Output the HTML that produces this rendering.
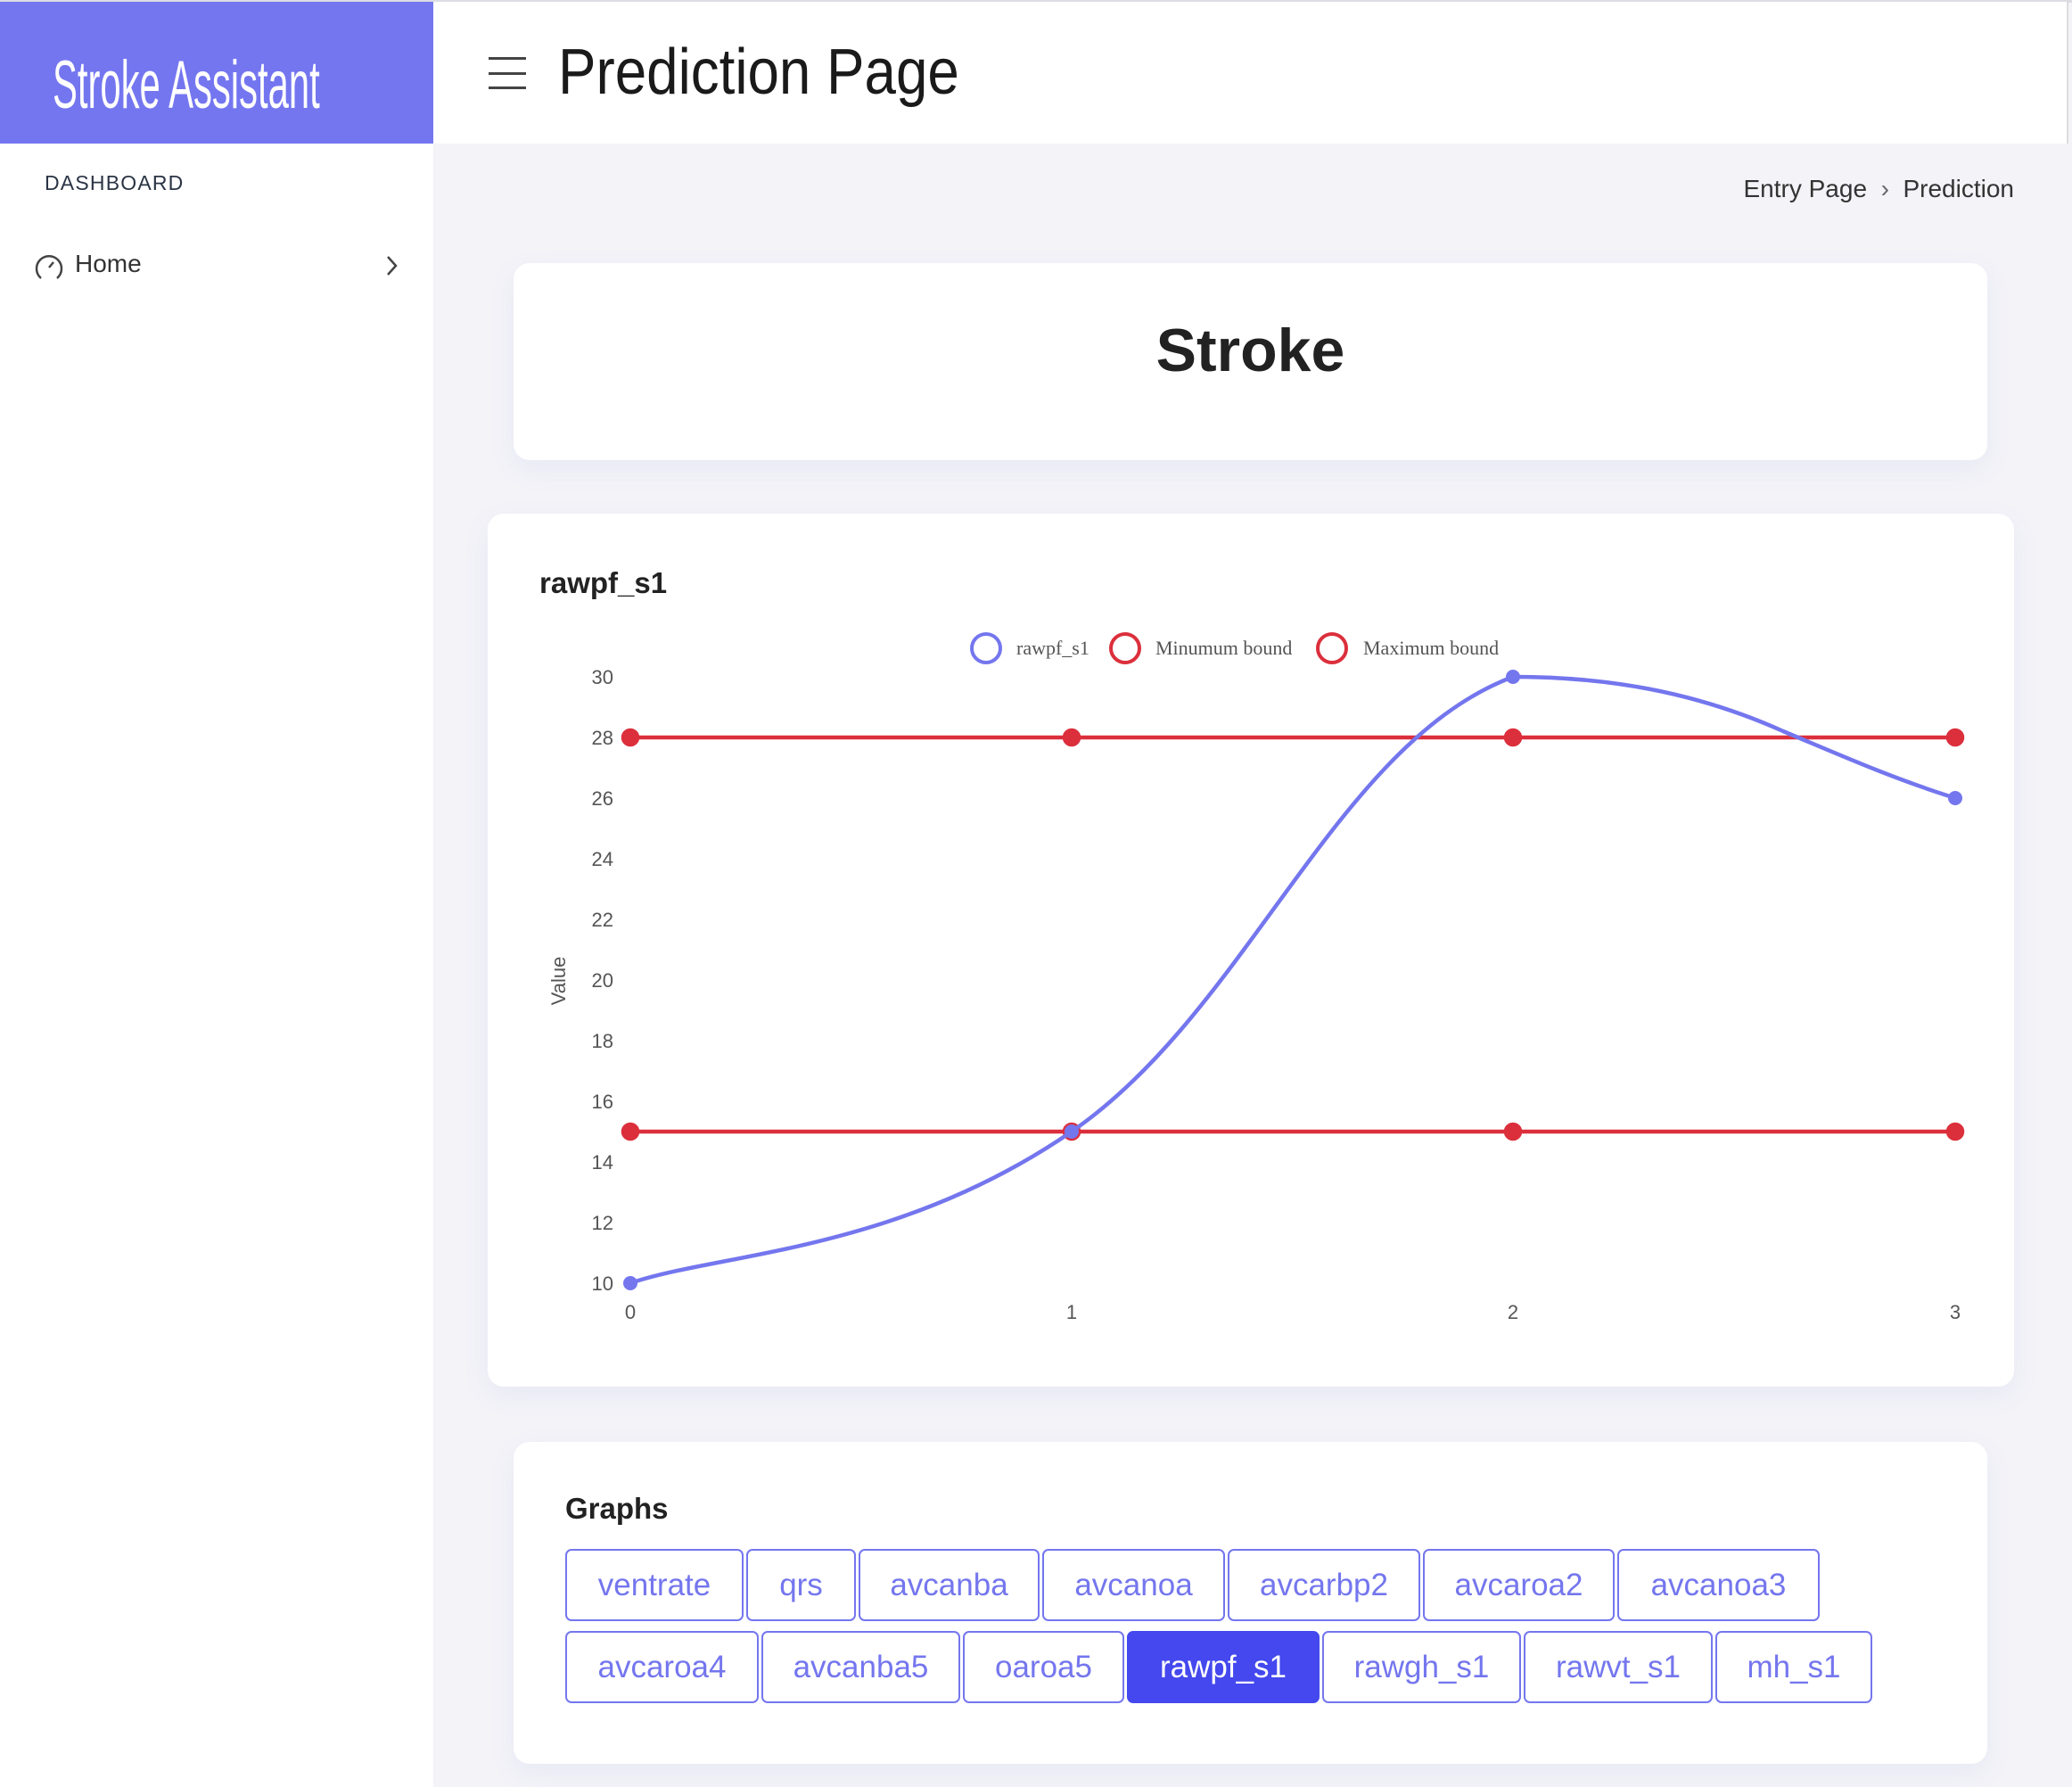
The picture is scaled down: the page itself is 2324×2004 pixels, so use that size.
<!DOCTYPE html>
<html><head><meta charset="utf-8"><style>
*{margin:0;padding:0;box-sizing:border-box}
body{width:2324px;height:2004px;position:relative;background:#f3f3f8;font-family:"Liberation Sans",sans-serif;overflow:hidden}
.abs{position:absolute}
.card{position:absolute;background:#fff;border-radius:18px;box-shadow:0 10px 30px rgba(120,120,200,.08)}
.btn{position:absolute;height:81px;border:2px solid #7476ee;border-radius:7px;color:#7476ee;font-size:35px;display:flex;align-items:center;justify-content:center;background:#fff}
.btn.on{background:#4448ee;color:#fff;border-color:#4448ee}
</style></head><body>
<div class="abs" style="left:0;top:0;width:2324px;height:3px;background:#dcdce4"></div>
<div class="abs" style="left:0;top:2px;width:486px;height:159px;background:#7476f0"></div>
<div class="abs" style="left:59px;top:52px;color:#fff;font-size:76px;transform:scaleX(.55);transform-origin:left top;white-space:nowrap">Stroke Assistant</div>
<div class="abs" style="left:486px;top:2px;width:1833px;height:159px;background:#fff"></div>
<div class="abs" style="left:2318px;top:0;width:2px;height:161px;background:#ddd"></div>
<div class="abs" style="left:0;top:161px;width:486px;height:1843px;background:#fff"></div>
<div class="abs" style="left:548px;top:64px;width:42px;height:3px;background:#444"></div>
<div class="abs" style="left:548px;top:81px;width:42px;height:3px;background:#444"></div>
<div class="abs" style="left:548px;top:97px;width:42px;height:3px;background:#444"></div>
<div class="abs" style="left:626px;top:40px;font-size:72px;color:#1a1a1a;white-space:nowrap;transform:scaleX(.885);transform-origin:left top">Prediction Page</div>
<div class="abs" style="left:50px;top:192px;font-size:23px;letter-spacing:1.2px;color:#2a3444">DASHBOARD</div>
<svg class="abs" style="left:38px;top:282px" width="34" height="34" viewBox="0 0 34 34"><path d="M8 30 A14 14 0 1 1 26 30" fill="none" stroke="#444" stroke-width="2.5"/><path d="M17 18 L22 12" stroke="#444" stroke-width="2.5"/></svg>
<div class="abs" style="left:84px;top:280px;font-size:28px;color:#333">Home</div>
<svg class="abs" style="left:432px;top:285px" width="16" height="26"><path d="M3 3 L12 13 L3 23" fill="none" stroke="#444" stroke-width="2.5"/></svg>
<div class="abs" style="right:65px;top:196px;font-size:28px;color:#333;white-space:nowrap">Entry Page &nbsp;<span style="color:#666">&#8250;</span>&nbsp; Prediction</div>
<div class="card" style="left:576px;top:295px;width:1653px;height:221px"></div>
<div class="abs" style="left:576px;top:354px;width:1653px;text-align:center;font-size:68px;font-weight:bold;color:#222">Stroke</div>
<div class="card" style="left:547px;top:576px;width:1712px;height:979px"></div>
<div class="abs" style="left:605px;top:635px;font-size:33px;font-weight:bold;color:#222">rawpf_s1</div>
<svg class="abs" style="left:0;top:0" width="2324" height="2004" font-family="Liberation Sans" >
<g font-family="Liberation Serif" font-size="22" fill="#555">
<circle cx="1106" cy="727" r="16" fill="none" stroke="#7476ee" stroke-width="4"/><text x="1140" y="734">rawpf_s1</text>
<circle cx="1262" cy="727" r="16" fill="none" stroke="#dc2f3c" stroke-width="4"/><text x="1296" y="734">Minumum bound</text>
<circle cx="1494" cy="727" r="16" fill="none" stroke="#dc2f3c" stroke-width="4"/><text x="1529" y="734">Maximum bound</text>
</g>
<g font-size="22" fill="#555" text-anchor="end">
<text x="688" y="767">30</text><text x="688" y="835">28</text><text x="688" y="903">26</text><text x="688" y="971">24</text><text x="688" y="1039">22</text><text x="688" y="1107">20</text><text x="688" y="1175">18</text><text x="688" y="1243">16</text><text x="688" y="1311">14</text><text x="688" y="1379">12</text><text x="688" y="1447">10</text>
</g>
<g font-size="22" fill="#555" text-anchor="middle">
<text x="707" y="1479">0</text><text x="1202" y="1479">1</text><text x="1697" y="1479">2</text><text x="2193" y="1479">3</text>
</g>
<text transform="translate(634,1100) rotate(-90)" text-anchor="middle" font-size="22" fill="#555">Value</text>
<g stroke="#dc2f3c" stroke-width="4.5" fill="#dc2f3c">
<line x1="707" y1="827" x2="2193" y2="827"/><line x1="707" y1="1269" x2="2193" y2="1269"/>
<circle cx="707" cy="827" r="8"/><circle cx="1202" cy="827" r="8"/><circle cx="1697" cy="827" r="8"/><circle cx="2193" cy="827" r="8"/>
<circle cx="707" cy="1269" r="8"/><circle cx="1202" cy="1269" r="8"/><circle cx="1697" cy="1269" r="8"/><circle cx="2193" cy="1269" r="8"/>
</g>
<path d="M707 1439 C806 1405 1004 1405 1202 1269 C1400 1133 1498 834 1697 759 C1800 759 1900 775 2000 820 C2060 845 2120 872 2193 895" fill="none" stroke="#7476ee" stroke-width="4.5"/>
<g fill="#7476ee"><circle cx="707" cy="1439" r="8"/><circle cx="1202" cy="1269" r="8"/><circle cx="1697" cy="759" r="8"/><circle cx="2193" cy="895" r="8"/></g>
</svg>
<div class="card" style="left:576px;top:1617px;width:1653px;height:361px"></div>
<div class="abs" style="left:634px;top:1673px;font-size:33px;font-weight:bold;color:#222">Graphs</div>
<div class="btn" style="left:634px;top:1737px;width:200px">ventrate</div>
<div class="btn" style="left:837px;top:1737px;width:123px">qrs</div>
<div class="btn" style="left:963px;top:1737px;width:203px">avcanba</div>
<div class="btn" style="left:1169px;top:1737px;width:205px">avcanoa</div>
<div class="btn" style="left:1377px;top:1737px;width:216px">avcarbp2</div>
<div class="btn" style="left:1596px;top:1737px;width:215px">avcaroa2</div>
<div class="btn" style="left:1814px;top:1737px;width:227px">avcanoa3</div>
<div class="btn" style="left:634px;top:1829px;width:217px">avcaroa4</div>
<div class="btn" style="left:854px;top:1829px;width:223px">avcanba5</div>
<div class="btn" style="left:1080px;top:1829px;width:181px">oaroa5</div>
<div class="btn on" style="left:1264px;top:1829px;width:216px">rawpf_s1</div>
<div class="btn" style="left:1483px;top:1829px;width:223px">rawgh_s1</div>
<div class="btn" style="left:1709px;top:1829px;width:212px">rawvt_s1</div>
<div class="btn" style="left:1924px;top:1829px;width:176px">mh_s1</div>
</body></html>
